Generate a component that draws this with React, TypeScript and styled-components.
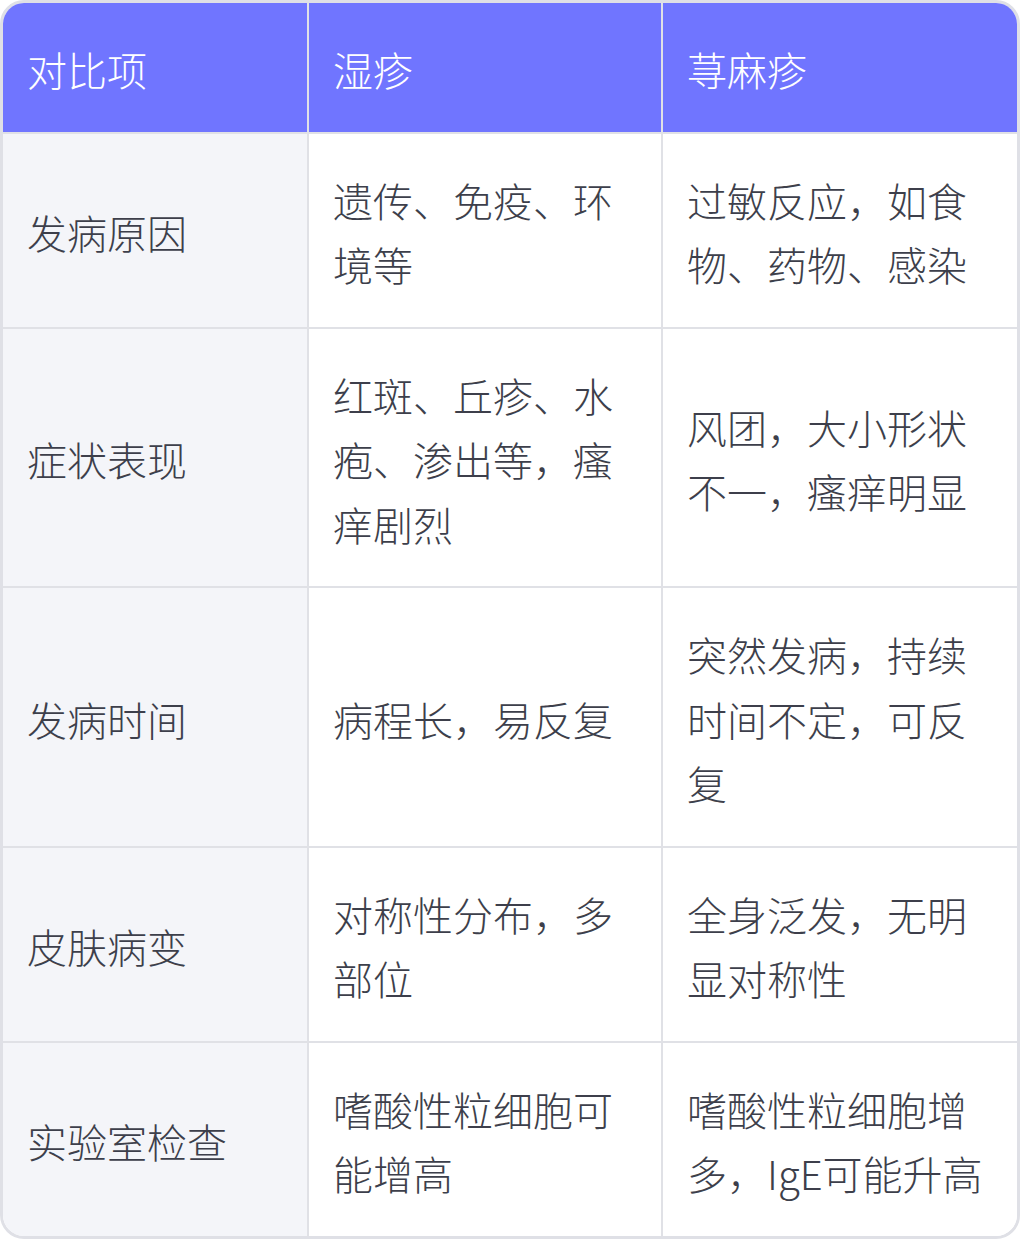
import React from "react";
import styled, {createGlobalStyle} from "styled-components";

const GlobalStyle = createGlobalStyle`
  html, body {
    margin: 0;
    padding: 0;
    background: #ffffff;
  }
`;

const Table = styled.div`
  box-sizing: border-box;
  width: 1020px;
  display: grid;
  grid-template-columns: 306px 354px 1fr;
  border: 3px solid #dfe0e6;
  border-radius: 24px;
  overflow: hidden;
  font-family: "Noto Sans CJK SC", "Noto Sans", sans-serif;
  font-weight: 300;
  font-size: 40px;
  line-height: 64.5px;
`;

const Cell = styled.div<{ $head?: boolean; $label?: boolean; $last?: boolean; $bottom?: boolean }>`
  box-sizing: border-box;
  display: flex;
  align-items: center;
  padding: 34px 24px 30px 24px;
  border-right: ${p => (p.$last ? "none" : "2px solid #e0e1e6")};
  border-bottom: ${p => (p.$bottom ? "none" : "2px solid #e0e1e6")};
  background: ${p => (p.$head ? "#7075ff" : p.$label ? "#f4f5f9" : "#ffffff")};
  color: ${p => (p.$head ? "#ffffff" : "#3d3f4b")};
`;

const headers = ["对比项", "湿疹", "荨麻疹"];

const rows: string[][] = [
    ["发病原因", "遗传、免疫、环境等", "过敏反应，如食物、药物、感染"],
    ["症状表现", "红斑、丘疹、水疱、渗出等，瘙痒剧烈", "风团，大小形状不一，瘙痒明显"],
    ["发病时间", "病程长，易反复", "突然发病，持续时间不定，可反复"],
    ["皮肤病变", "对称性分布，多部位", "全身泛发，无明显对称性"],
    ["实验室检查", "嗜酸性粒细胞可能增高", "嗜酸性粒细胞增多，IgE可能升高"],
];

const App = () => {
    return (
        <>
            <GlobalStyle/>
            <Table>
                {headers.map((h, i) => (
                    <Cell key={h} $head $last={i === 2}>{h}</Cell>
                ))}
                {rows.map((row, r) =>
                    row.map((text, c) => (
                        <Cell
                            key={`${r}-${c}`}
                            $label={c === 0}
                            $last={c === 2}
                            $bottom={r === rows.length - 1}
                        >
                            {text}
                        </Cell>
                    ))
                )}
            </Table>
        </>
    );
};

export default App;
